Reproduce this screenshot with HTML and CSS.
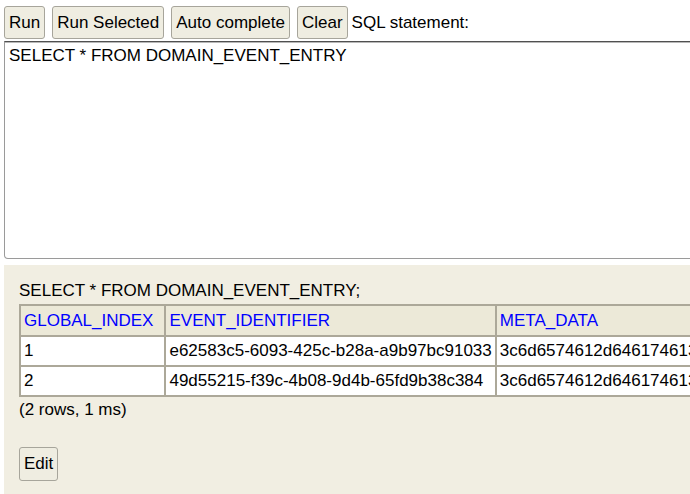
FILE: index.html
```html
<!DOCTYPE html>
<html>
<head>
<meta charset="utf-8">
<link rel="stylesheet" href="styles.css">
</head>
<body>
<div class="toolbar">
  <button class="btn">Run</button>
  <button class="btn">Run Selected</button>
  <button class="btn">Auto complete</button>
  <button class="btn">Clear</button>
  <span class="label">SQL statement:</span>
</div>
<div class="editor">
  <textarea class="sql" spellcheck="false">SELECT * FROM DOMAIN_EVENT_ENTRY</textarea>
</div>
<div class="result">
  <div class="stmt">SELECT * FROM DOMAIN_EVENT_ENTRY;</div>
  <table class="grid">
    <tr>
      <th class="c1">GLOBAL_INDEX</th>
      <th class="c2">EVENT_IDENTIFIER</th>
      <th class="c3">META_DATA</th>
    </tr>
    <tr>
      <td>1</td>
      <td>e62583c5-6093-425c-b28a-a9b97bc91033</td>
      <td>3c6d6574612d646174613e3c656e74726965732f3e3c2f6d6574612d646174613e</td>
    </tr>
    <tr>
      <td>2</td>
      <td>49d55215-f39c-4b08-9d4b-65fd9b38c384</td>
      <td>3c6d6574612d646174613e3c656e74726965732f3e3c2f6d6574612d646174613e</td>
    </tr>
  </table>
  <div class="info">(2 rows, 1 ms)</div>
  <button class="btn edit">Edit</button>
</div>
</body>
</html>
```

FILE: styles.css
```css
html, body {
  margin: 0;
  padding: 0;
  width: 690px;
  height: 494px;
  overflow: hidden;
  background: #ffffff;
}
body {
  font-family: "Liberation Sans", Arial, sans-serif;
  font-size: 17px;
  color: #000000;
}
.toolbar {
  display: flex;
  align-items: center;
  gap: 7px;
  padding: 6px 0 0 4px;
  height: 33px;
}
.btn {
  font-family: "Liberation Sans", Arial, sans-serif;
  font-size: 17px;
  color: #000000;
  height: 33px;
  padding: 0 4px;
  margin: 0;
  border: 1px solid #a7a59b;
  border-radius: 3px;
  background: #efede1;
  box-sizing: border-box;
  white-space: nowrap;
  line-height: 20px;
}
.label {
  margin-left: -3px;
  white-space: nowrap;
}
.editor {
  margin: 2px 0 0 4px;
  height: 218px;
}
.sql {
  display: block;
  width: 900px;
  height: 218px;
  box-sizing: border-box;
  margin: 0;
  padding: 4px 4px;
  border: 1px solid #9a9a9a;
  border-top: 1px solid #505050;
  border-radius: 0 0 0 4px;
  box-shadow: inset 0 1px 0 #b8b8b8;
  font-family: "Liberation Sans", Arial, sans-serif;
  font-size: 17px;
  line-height: 20px;
  color: #000000;
  resize: none;
  outline: none;
  overflow: hidden;
  background: #ffffff;
}
.result {
  margin: 6px 0 0 4px;
  width: 900px;
  height: 229px;
  background: #f1eee2;
  padding: 16px 0 0 15px;
  box-sizing: border-box;
}
.stmt {
  line-height: 20px;
  height: 23px;
  white-space: nowrap;
}
.grid {
  border-collapse: separate;
  border-spacing: 0;
  border: 1px solid #aca899;
  white-space: nowrap;
}
.grid th, .grid td {
  border: 1px solid #aca899;
  padding: 4px 3px;
  line-height: 20px;
  text-align: left;
  font-weight: normal;
}
.grid th {
  background: #ece9d8;
  color: #0000ff;
  padding-top: 5px;
}
.grid td {
  background: #ffffff;
}
.grid .c1 {
  padding-right: 11px;
}
.info {
  margin-top: 3px;
  line-height: 20px;
}
.edit {
  margin-top: 27px;
  height: 34px;
}
```
